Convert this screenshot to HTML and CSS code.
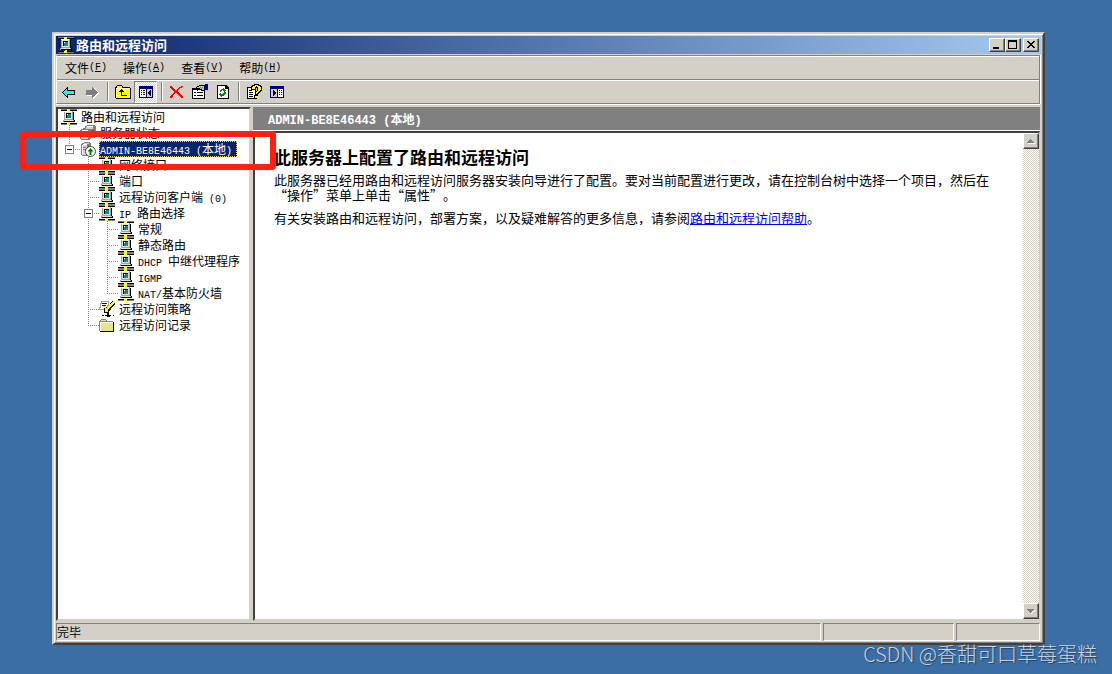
FILE: index.html
```html
<!DOCTYPE html>
<html lang="zh-CN">
<head>
<meta charset="utf-8">
<meta name="viewport" content="width=device-width, initial-scale=1">
<title>路由和远程访问</title>
<link rel="stylesheet" href="styles.css">
</head>
<body>
<svg class="defs" aria-hidden="true">
  <symbol id="net" viewBox="0 0 16 16">
    <path fill="#808080" d="M0 0h16v1H0z"/>
    <path d="M0 1h16v1H0zM0 14h16v1H0z"/>
    <path fill="#808080" d="M0 15h16v1H0z"/>
    <path fill="#ff0" d="M6 0h3v2H6zM7 13h2v1H7zM6 14h3v2H6z"/>
    <path fill="#a0a0a0" d="M3 2h9v9H3zM2 11h11v2H2z"/>
    <path fill="#e4e2dc" d="M4 3h7v7H4zM3 11h9v1H3z"/>
    <path d="M12 3h1v8h1v2H3v-1h10v-1h-1zM5 4h5v5H5z"/>
    <path fill="#009090" d="M6 5h4v4H6z"/>
    <path fill="#fff" d="M6 5h1v1H6zM3 2h8v1H3z"/>
  </symbol>
  <symbol id="server" viewBox="0 0 16 16">
    <path fill="#808080" d="M1 3h1V2h2V1h6v1h1v11h-1v1H9v1H2v-1H1z"/>
    <path fill="#d4d0c8" d="M2 4h5v10H2zM4 2h5v1H4z"/>
    <path fill="#fff" d="M2 4h1v9H2zM3 3h4v1H3z"/>
    <path fill="#808080" d="M3 6h3v1H3zM3 8h3v1H3z"/>
    <path fill="#404040" d="M8 5h1v9H8z"/>
  </symbol>
  <symbol id="servers" viewBox="0 0 16 16">
    <path fill="#808080" d="M5 1h2V0h8v1h1v11h-1v1H5zM0 5h1V4h2V3h7v1h1v10h-1v1H1v-1H0z"/>
    <path fill="#d4d0c8" d="M6 2h7v2H6zM1 6h7v8H1z"/>
    <path fill="#fff" d="M7 1h6v1H7zM2 5h6v1H2z"/>
    <path fill="#808080" d="M2 8h5v1H2zM2 10h5v1H2z"/>
    <path fill="red" d="M12 5h2v1h-2z"/>
  </symbol>
  <symbol id="policy" viewBox="0 0 16 16">
    <path fill="#fff" stroke="#a0a0a0" d="M2.500.500h7l-1 8h-8z"/>
    <path fill="#00f" d="M3 2h5v1H3zM3 4h4v1H3z"/>
    <path fill="none" stroke="#000" stroke-width="4" d="M15.500 1l-7 8"/>
    <path fill="#ff0" stroke="#000" d="M5.500 6.500h4v5h-4z"/>
    <path fill="none" stroke="#ff0" stroke-width="2" d="M15 1l-8 8M5 5l3 4"/>
    <path d="M8 12h2v2H8zM3 14h2v1H3zM6 14h6v1H6zM8 15h3v1H8zM14 14h1v1h-1z"/>
  </symbol>
  <symbol id="folder" viewBox="0 0 16 16">
    <path fill="#808080" d="M0 4h1V3h1V2h5v1h1v1h6v1h1v9h-1v1H1v-1H0z"/>
    <path fill="#e6e684" d="M1 5h13v9H1zM2 3h5v1H2z"/>
    <path fill="#fff" d="M1 5h13v1H2v8H1z"/>
    <path d="M14 5h1v10H1v-1h13z"/>
  </symbol>
</svg>

<main class="window">
  <header class="titlebar">
    <svg class="icon" viewBox="0 0 16 16"><use href="#net"/></svg>
    <h1 class="caption">路由和远程访问</h1>
    <button class="cap-btn" aria-label="最小化"><svg viewBox="0 0 12 10"><path d="M2 7h6v2H2z"/></svg></button>
    <button class="cap-btn" aria-label="最大化"><svg viewBox="0 0 12 10"><path fill-rule="evenodd" d="M1 0h9v9H1zM2 2h7v6H2z"/></svg></button>
    <button class="cap-btn cap-close" aria-label="关闭"><svg viewBox="0 0 12 10"><path d="M2 1h2v1h1v1h2V2h1V1h2v1H9v1H8v1H7v1h1v1h1v1h1v1H8V7H7V6H5v1H4v1H2V7h1V6h1V5h1V4H4V3H3V2H2z"/></svg></button>
  </header>

  <div class="bars">
    <nav class="menubar">
      <button class="menu">文件<span class="en">(<u>F</u>)</span></button>
      <button class="menu">操作<span class="en">(<u>A</u>)</span></button>
      <button class="menu">查看<span class="en">(<u>V</u>)</span></button>
      <button class="menu">帮助<span class="en">(<u>H</u>)</span></button>
    </nav>
    <div class="toolbar" role="toolbar">
      <button class="tool" aria-label="后退"><svg class="icon" viewBox="0 0 16 16"><path d="M6 3h1v3h7v5H7v3H6v-1H5v-1H4v-1H3v-1H2V9H1V8h1V7h1V6h1V5h1V4h1z"/><path fill="#0ff" d="M5 5h1v2h7v3H6v2H5v-1H4v-1H3V9H2V8h1V7h1V6h1z"/></svg></button>
      <button class="tool" aria-label="前进"><svg class="icon" viewBox="0 0 16 16"><path fill="#fff" d="M10 4h1v1h1v1h1v1h1v1h1v2h-1v1h-1v1h-1v1h-1v1h-1v1H9v-3H3v-1h7z"/><path fill="#808080" d="M8 3h1v1h1v1h1v1h1v1h1v1h1v1h-1v1h-1v1h-1v1h-1v1H9v1H8v-3H2V6h6z"/></svg></button>
      <span class="sep"></span>
      <button class="tool" aria-label="向上"><svg class="icon" viewBox="0 0 16 16"><path d="M0 3h1V2h1V1h5v1h1v1h7v1h1v11H1v-1H0z"/><path fill="#ff0" d="M1 4h14v10H1zM2 2h5v2H2z"/><path fill="#ffff9c" d="M1 4h13v1H2v9H1z"/><path d="M6 5h1v1h1v1h1v1H7v3h5v1H6V8H4V7h1V6h1z"/></svg></button>
      <button class="tool pressed" aria-label="显示/隐藏控制台树" aria-pressed="true"><svg class="icon" viewBox="0 0 16 16"><path fill="#000080" d="M1 2h14v12H1z"/><path fill="#fff" d="M2 5h6v8H2z"/><path fill="#d4d0c8" d="M9 5h5v8H9z"/><path d="M3 6h1v1H3zM5 6h2v1H5zM3 8h1v1H3zM5 8h2v1H5zM3 10h1v1H3zM5 10h2v1H5zM12 6h1v6h-1v-1h-1v-1h-1V8h1V7h1z"/></svg></button>
      <span class="sep"></span>
      <button class="tool" aria-label="删除"><svg class="icon" viewBox="0 0 16 16"><path fill="red" d="M1 2h2v1h1v1h1v1h1v1h2V5h1V4h1V3h2V2h2v1h-1v1h-2v1h-1v1H9v2h1v1h1v1h1v1h1v1h1v2h-2v-1h-1v-1h-1v-1H9v-1H8V9H6v1H5v1H4v2H3v1H1v-2h1v-1h1v-1h1V9h1V7H4V6H3V5H2V4H1z"/></svg></button>
      <button class="tool" aria-label="属性"><svg class="icon" viewBox="0 0 16 16"><path d="M0 4h13v11H0z"/><path fill="#fff" d="M1 6h11v8H1z"/><path d="M2 8h2v1H2zM5 8h6v1H5zM2 11h2v1H2zM5 11h6v1H5z"/><path d="M4 3h1V2h2V1h6v6H9V6H7V5H6v2H5V6H4z"/><path fill="#c8c4b8" d="M5 3h2V2h5v4h-2V5H8V4H5z"/><path fill="#808080" d="M8 3h1v1H8zM10 3h1v1h-1zM9 4h1v1H9z"/><path fill="#000080" d="M12 1h1V0h3v6h-3V5h-1z"/></svg></button>
      <button class="tool" aria-label="刷新"><svg class="icon" viewBox="0 0 16 16"><path d="M2 1h9l3 3v11H2z"/><path fill="#fff" d="M3 2h7v3h3v9H3z"/><path fill="#008000" d="M5 8V6h1V5h2V4h1v1h1v1h1v1h-1v1H9V7H8V6H7v1H6v1zM11 9v1h-1v1H9v1H7v1H6v-1H5v-1H4v-1h1V9h1v1h2V9h1V8h2z"/></svg></button>
      <span class="sep"></span>
      <button class="tool" aria-label="帮助"><svg class="icon" viewBox="0 0 16 16"><path d="M1 3h9v12H1z"/><path fill="#fff" d="M2 4h7v10H2z"/><path d="M3 6h3v1H3zM3 8h4v1H3zM3 10h4v1H3zM3 12h4v1H3z"/><path d="M5 2h1V1h2V0h5v1h2v1h1v5h-1v1h-1v1h-1v1h-1v4h-1v1H9v-1H8v-3h1V8h1V7h1V4h-1v2H5z"/><path fill="#ff0" d="M6 3h1V2h2V1h3v1h2v1h1v3h-1v1h-1v1h-1v1h-1v1h-1V8h1V7h1V3h-1V2h-1v1H9v2H6zM9 12h3v2H9z"/></svg></button>
      <button class="tool" aria-label="显示/隐藏操作窗格"><svg class="icon" viewBox="0 0 16 16"><path fill="#000080" d="M1 2h14v12H1z"/><path fill="#d4d0c8" d="M2 5h6v8H2z"/><path fill="#fff" d="M9 5h5v8H9z"/><path d="M10 6h1v1h-1zM12 6h1v1h-1zM10 8h1v1h-1zM12 8h1v1h-1zM10 10h1v1h-1zM12 10h1v1h-1zM4 6h1v1h1v1h1v2H6v1H5v1H4z"/></svg></button>
    </div>
  </div>

  <div class="panes">
    <ul class="tree" role="tree">
      <li class="row"><svg class="icon"><use href="#net"/></svg><span class="label">路由和远程访问</span></li>
      <li class="row"><i class="g tee"></i><svg class="icon"><use href="#servers"/></svg><span class="label">服务器状态</span></li>
      <li class="row marked"><i class="g elbow"><button class="fold" aria-label="折叠"></button></i><span class="badge-icon"><svg class="icon"><use href="#server"/></svg><svg class="up" viewBox="0 0 11 11"><circle cx="5.500" cy="5.500" r="5" fill="#fff" stroke="#444"/><path fill="#008000" d="M5.500 2l3 3.500h-2V9h-2V5.500h-2z"/></svg></span><span class="label selected"><span class="en">ADMIN-BE8E46443 (</span>本地<span class="en">)</span></span></li>
      <li class="row"><i class="g"></i><i class="g tee"></i><svg class="icon"><use href="#net"/></svg><span class="label">网络接口</span></li>
      <li class="row"><i class="g"></i><i class="g tee"></i><svg class="icon"><use href="#net"/></svg><span class="label">端口</span></li>
      <li class="row"><i class="g"></i><i class="g tee"></i><svg class="icon"><use href="#net"/></svg><span class="label">远程访问客户端<span class="en"> (0)</span></span></li>
      <li class="row"><i class="g"></i><i class="g tee"><button class="fold" aria-label="折叠"></button></i><svg class="icon"><use href="#net"/></svg><span class="label"><span class="en">IP </span>路由选择</span></li>
      <li class="row"><i class="g"></i><i class="g line"></i><i class="g tee"></i><svg class="icon"><use href="#net"/></svg><span class="label">常规</span></li>
      <li class="row"><i class="g"></i><i class="g line"></i><i class="g tee"></i><svg class="icon"><use href="#net"/></svg><span class="label">静态路由</span></li>
      <li class="row"><i class="g"></i><i class="g line"></i><i class="g tee"></i><svg class="icon"><use href="#net"/></svg><span class="label"><span class="en">DHCP </span>中继代理程序</span></li>
      <li class="row"><i class="g"></i><i class="g line"></i><i class="g tee"></i><svg class="icon"><use href="#net"/></svg><span class="label"><span class="en">IGMP</span></span></li>
      <li class="row"><i class="g"></i><i class="g line"></i><i class="g elbow"></i><svg class="icon"><use href="#net"/></svg><span class="label"><span class="en">NAT/</span>基本防火墙</span></li>
      <li class="row"><i class="g"></i><i class="g tee"></i><svg class="icon"><use href="#policy"/></svg><span class="label">远程访问策略</span></li>
      <li class="row"><i class="g"></i><i class="g elbow"></i><svg class="icon"><use href="#folder"/></svg><span class="label">远程访问记录</span></li>
    </ul>

    <section class="detail">
      <h2 class="banner"><span class="en">ADMIN-BE8E46443 (</span>本地<span class="en">)</span></h2>
      <div class="view">
        <article class="content">
          <h3 class="heading">此服务器上配置了路由和远程访问</h3>
          <p class="para">此服务器已经用路由和远程访问服务器安装向导进行了配置。要对当前配置进行更改，请在控制台树中选择一个项目，然后在“操作”菜单上单击“属性”。</p>
          <p class="para">有关安装路由和远程访问，部署方案，以及疑难解答的更多信息，请参阅<a href="#help">路由和远程访问帮助</a>。</p>
        </article>
        <div class="scroll">
          <button class="scroll-btn" aria-label="向上滚动"><svg viewBox="0 0 12 12"><path fill="#fff" d="M3 8h8v1H3z"/><path fill="#808080" d="M5 4h1v1h1v1h1v1h1v1H2V7h1V6h1V5h1z"/></svg></button>
          <button class="scroll-btn" aria-label="向下滚动"><svg viewBox="0 0 12 12"><path fill="#fff" d="M9 5h1v1H9v1H8v1H7v1H6V8h1V7h1V6h1z"/><path fill="#808080" d="M2 4h7v1H8v1H7v1H6v1H5V7H4V6H3V5H2z"/></svg></button>
        </div>
      </div>
    </section>
  </div>

  <footer class="status">
    <span class="cell main">完毕</span>
    <span class="cell mid"></span>
    <span class="cell end"></span>
  </footer>
</main>
<div class="watermark">CSDN @香甜可口草莓蛋糕</div>
</body>
</html>
```
FILE: styles.css
```css
*, *::after { box-sizing: border-box; }

body {
  margin: 0;
  min-height: 100vh;
  padding: 32px 67px 29px 52px;
  display: flex;
  position: relative;
  background: #3a6ea5;
  color: #000;
  font: 12px/16px "Noto Sans CJK SC", sans-serif;
  text-spacing-trim: space-all;
}

.defs { position: absolute; width: 0; height: 0; }
h1, h2, h3, p, ul { margin: 0; padding: 0; }
svg { display: block; shape-rendering: crispEdges; }
.icon { width: 16px; height: 16px; flex: none; }
.up { shape-rendering: auto; }
button { font: inherit; color: inherit; padding: 0; margin: 0; border: 0; background: none; }
.en { font-family: "Liberation Mono", monospace; font-size: 10px; white-space: pre; }

.window {
  flex: 1;
  min-width: 0;
  display: flex;
  flex-direction: column;
  padding: 2px;
  background: #d4d0c8;
  border: 2px solid;
  border-color: #d4d0c8 #404040 #404040 #d4d0c8;
  box-shadow: inset 1px 1px #fff, inset -1px -1px #808080;
}

.titlebar {
  height: 18px;
  display: flex;
  align-items: center;
  padding: 0 2px;
  margin-bottom: 1px;
  background: linear-gradient(to right, #0a246a, #a6caf0);
}
.caption { flex: 1; padding-left: 2px; color: #fff; font-size: 13px; line-height: 18px; font-weight: bold; }
.cap-btn, .scroll-btn {
  background: #d4d0c8;
  border: 1px solid;
  border-color: #fff #404040 #404040 #fff;
  box-shadow: inset -1px -1px #808080;
}
.cap-btn { width: 16px; height: 14px; padding: 1px; }
.cap-btn svg { width: 12px; height: 10px; }
.cap-close { margin-left: 2px; }

.bars { border: 1px solid #808080; border-left-color: #fff; box-shadow: inset 0 1px #fff, 0 1px #fff, 1px 0 #fff; margin-right: 1px; }
.menubar { display: flex; height: 24px; padding-top: 1px; border-bottom: 1px solid #808080; }
.menu { padding: 0 8px; display: flex; align-items: center; }
.toolbar { display: flex; height: 23px; border-top: 1px solid #fff; }
.tool { width: 23px; height: 22px; display: grid; place-items: center; }
.pressed {
  border: 1px solid;
  border-color: #808080 #fff #fff #808080;
  background: repeating-conic-gradient(#fff 0 25%, #d4d0c8 0 50%) 0 0 / 2px 2px;
}
.sep { width: 2px; height: 19px; margin: 1px 2px 0 4px; border-left: 1px solid #808080; border-right: 1px solid #fff; }

.panes { flex: 1; display: flex; gap: 2px; margin-top: 3px; min-height: 0; }
.tree {
  width: 195px;
  flex: none;
  list-style: none;
  background: #fff;
  padding-left: 3px;
}
.tree, .view {
  border: 2px solid;
  border-color: #404040 #d4d0c8 #d4d0c8 #404040;
  box-shadow: inset -1px -1px #fff;
}
.row { display: flex; height: 16px; }
.label { margin-left: 3px; padding: 0 5px 0 1px; white-space: nowrap; line-height: 16px; }
.selected { background: #0a246a; color: #fff; outline: 1px dotted #e8c860; outline-offset: -1px; }
.g {
  --v: repeating-linear-gradient(#808080 0 1px, transparent 1px 2px) 8px 0 / 1px;
  --h: repeating-linear-gradient(to right, #808080 0 1px, transparent 1px 2px) 8px 8px / 11px 1px no-repeat;
  width: 19px;
  flex: none;
  padding: 4px 0 0 4px;
}
.line { background: var(--v) 100% no-repeat; }
.tee { background: var(--v) 100% no-repeat, var(--h); }
.elbow { background: var(--v) 9px no-repeat, var(--h); }
.fold {
  display: block;
  width: 9px;
  height: 9px;
  border: 1px solid #808080;
  background: linear-gradient(#000, #000) 1px 3px / 5px 1px no-repeat #fff;
}
.badge-icon { position: relative; }
.up { position: absolute; right: 0; bottom: 0; width: 11px; height: 11px; }

/* Highlight frame drawn around the selected server */
.marked { position: relative; z-index: 2; }
.marked::after {
  content: "";
  position: absolute;
  left: -41px;
  top: -10px;
  width: 256px;
  height: 39px;
  border: 6px solid #ff2012;
  border-radius: 4px;
  pointer-events: none;
}

.detail { flex: 1; min-width: 0; display: flex; flex-direction: column; margin-right: 1px; }
.banner {
  height: 24px;
  padding-left: 15px;
  background: #808080;
  border-bottom: 1px solid #fff;
  color: #fff;
  font-size: 12px;
  line-height: 24px;
}
.banner .en { font-size: 12px; }
.view { flex: 1; display: flex; background: #fff; border-right-width: 1px; }
.content { flex: 1; min-width: 0; padding: 14px 24px 0 19px; }
.heading { font-size: 17px; line-height: 20px; margin-bottom: 5px; }
.para { font-size: 13px; line-height: 15px; margin-bottom: 8px; }
.para a { color: #00f; }
.scroll {
  width: 16px;
  display: flex;
  flex-direction: column;
  justify-content: space-between;
  background: repeating-conic-gradient(#fff 0 25%, #d4d0c8 0 50%) 0 0 / 2px 2px;
}
.scroll-btn { width: 16px; height: 16px; padding: 1px; }

.status { display: flex; gap: 2px; margin: 2px 1px 0 0; height: 18px; }
.cell { border: 1px solid; border-color: #808080 #fff #fff #808080; line-height: 16px; }
.main { flex: 1; }
.mid { width: 131px; }
.end { width: 84px; }

.watermark {
  position: absolute;
  right: 15px;
  bottom: 7px;
  z-index: 3;
  color: #c9d2dc;
  font-size: 20px;
  font-weight: 300;
  line-height: 26px;
  text-shadow: 1px 1px 1px #26415f;
}
```
